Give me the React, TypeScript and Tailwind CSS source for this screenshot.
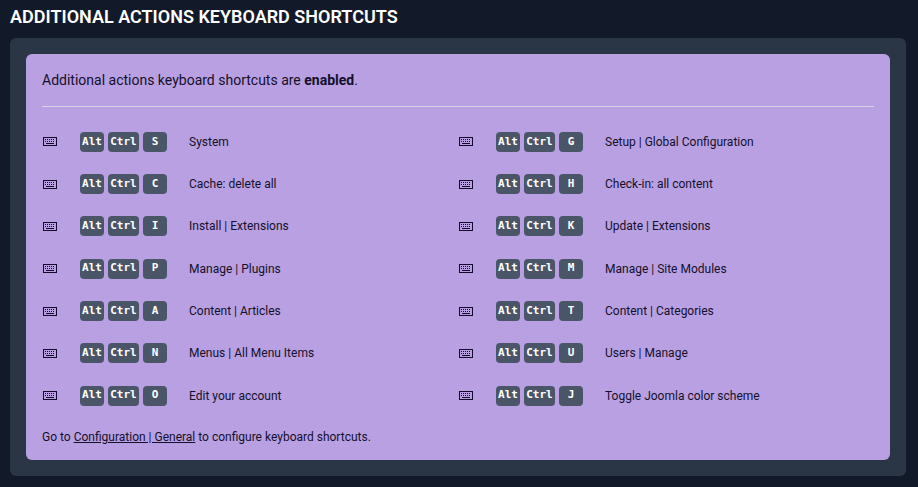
import React from "react";

const rows = [
  ["S", "System", "G", "Setup | Global Configuration"],
  ["C", "Cache: delete all", "H", "Check-in: all content"],
  ["I", "Install | Extensions", "K", "Update | Extensions"],
  ["P", "Manage | Plugins", "M", "Manage | Site Modules"],
  ["A", "Content | Articles", "T", "Content | Categories"],
  ["N", "Menus | All Menu Items", "U", "Users | Manage"],
  ["O", "Edit your account", "J", "Toggle Joomla color scheme"],
];

const KeyboardIcon = () => (
  <svg width="14" height="9" viewBox="0 0 14 9" fill="none" className="block">
    <rect x="0.5" y="0.5" width="13" height="8" stroke="#120a2a" />
    <path d="M2 2.5h10M2 4.5h10" stroke="#120a2a" strokeDasharray="1 1" />
    <path d="M3 6.5h8" stroke="#120a2a" />
  </svg>
);

const Kbd = ({ label, className }: { label: string; className: string }) => (
  <kbd
    className={`flex h-5 items-center justify-center rounded-[4px] bg-[#4a5568] text-[11px] font-bold text-white ${className}`}
    style={{ fontFamily: "'DejaVu Sans Mono', monospace" }}
  >
    {label}
  </kbd>
);

const Shortcut = ({ letter, label }: { letter: string; label: string }) => (
  <div className="flex h-[42.33px] w-[416px] items-center">
    <div className="w-[38px] pl-px">
      <KeyboardIcon />
    </div>
    <div className="flex w-[109px] gap-1">
      <Kbd label="Alt" className="w-6" />
      <Kbd label="Ctrl" className="w-[31px]" />
      <Kbd label={letter} className="w-6" />
    </div>
    <span className="text-xs text-[#14102a]">{label}</span>
  </div>
);

export default function App() {
  return (
    <div
      className="h-[487px] w-[918px] overflow-hidden bg-[#121a29] pt-[6px]"
      style={{ fontFamily: "Roboto, 'Noto Sans', sans-serif" }}
    >
      <h1 className="ml-2.5 h-[32px] text-lg leading-[22px] font-semibold text-white uppercase">
        Additional actions keyboard shortcuts
      </h1>
      <div className="mr-3 ml-2.5 rounded-md bg-[#2a3546] p-4">
        <div className="h-[406px] rounded-md bg-[#b9a0e3] px-4 text-[#14102a]">
          <p className="pt-[17px] text-sm leading-[19px]">
            Additional actions keyboard shortcuts are <strong>enabled</strong>.
          </p>
          <hr className="mt-4 border-t border-[#d5d5e0]" />
          <div className="mt-[13.6px] flex flex-col">
            {rows.map((row) => (
              <div key={row[0]} className="flex">
                <Shortcut letter={row[0]} label={row[1]} />
                <Shortcut letter={row[2]} label={row[3]} />
              </div>
            ))}
          </div>
          <p className="mt-3 text-xs">
            Go to{" "}
            <a href="#" className="underline">
              Configuration | General
            </a>{" "}
            to configure keyboard shortcuts.
          </p>
        </div>
      </div>
    </div>
  );
}
